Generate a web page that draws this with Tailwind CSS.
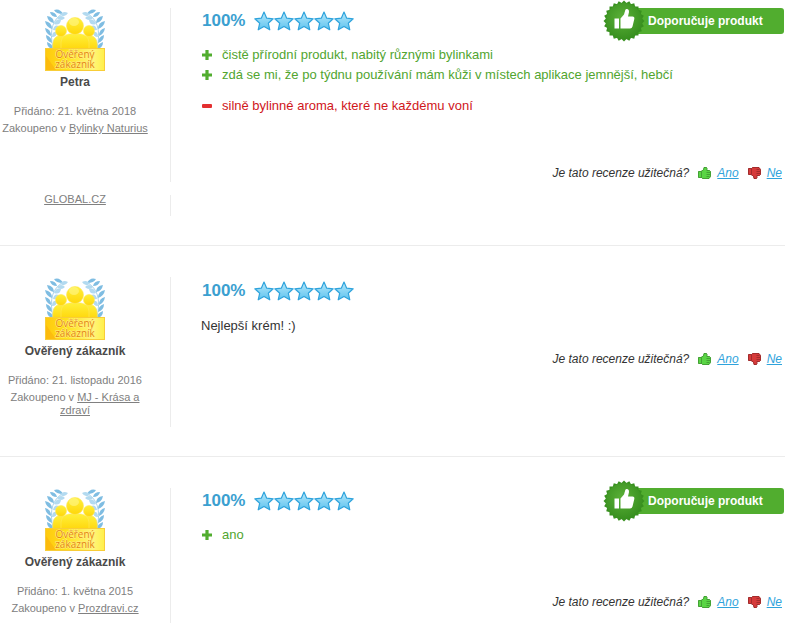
<!DOCTYPE html>
<html lang="cs">
<head>
  <meta charset="UTF-8" />
  <meta name="viewport" content="width=device-width, initial-scale=1.0" />
  <title>Recenze produktu</title>
  <script src="https://cdn.jsdelivr.net/npm/@tailwindcss/browser@4"></script>
</head>
<body class="bg-white font-['Liberation_Sans',Arial,sans-serif] text-[13px] text-[#333]">

  <!-- Ikony -->
  <svg width="0" height="0" class="absolute" aria-hidden="true">
    <defs>
      <linearGradient id="starFill" x1="0" y1="0" x2="0" y2="1">
        <stop offset="0" stop-color="#b5e8fb" />
        <stop offset="1" stop-color="#5fc3ee" />
      </linearGradient>
      <linearGradient id="goldFill" x1="0" y1="0" x2="0" y2="1">
        <stop offset="0" stop-color="#fff03a" />
        <stop offset="1" stop-color="#ffd60a" />
      </linearGradient>
      <linearGradient id="plateFill" x1="0" y1="0" x2="1" y2="0">
        <stop offset="0" stop-color="#ffc90e" />
        <stop offset="0.35" stop-color="#ffe01c" />
        <stop offset="0.8" stop-color="#fff67a" />
        <stop offset="1" stop-color="#ffef4a" />
      </linearGradient>
      <radialGradient id="sealFill" cx="0.45" cy="0.4" r="0.6">
        <stop offset="0" stop-color="#5bb038" />
        <stop offset="1" stop-color="#38901f" />
      </radialGradient>
      <symbol id="star" viewBox="0 0 20 20">
        <path d="M10 1 L12.7 7.2 L19.2 7.8 L14.3 12.2 L15.8 18.8 L10 15.4 L4.2 18.8 L5.7 12.2 L0.8 7.8 L7.3 7.2 Z" fill="url(#starFill)" stroke="#2fa3dc" stroke-width="1.2" stroke-linejoin="round" />
      </symbol>
      <symbol id="plus" viewBox="0 0 10 10">
        <path d="M3.4 0h3.2v3.4H10v3.2H6.6V10H3.4V6.6H0V3.4h3.4z" fill="#51ad2f" />
      </symbol>
      <symbol id="minus" viewBox="0 0 10 10">
        <rect y="3" width="10" height="4" rx="1" fill="#e32f30" />
      </symbol>
      <symbol id="thumb" viewBox="0 0 13 12">
        <path d="M0.5 4.500H3L5.500 2.800 6 0.500H8.500L9 1.500 8.800 3.500H11.500L12.500 4.500V9.500L11 11.500H4.500L3.500 10.500H0.500Z" fill="currentColor" stroke="currentColor" />
        <path d="M0.5 4.500H3L5.500 2.800 6 0.500H8.500L9 1.500 8.800 3.500H11.500L12.500 4.500V9.500L11 11.500H4.500L3.500 10.500H0.500Z M3.500 4.500V10.500 M8.500 5.500H12 M8.500 7.500H12 M8.500 9.500H11.500" fill="none" stroke="#000" stroke-opacity="0.24" />
      </symbol>
      <symbol id="branch" viewBox="0 0 24 42">
        <path d="M19 5Q2 13 8 40" fill="none" stroke="#a9d3ec" stroke-width="1" />
        <g fill="#7fbde2">
          <path d="M18 6Q11 6 9 2Q15 0 18 6Z" />
          <path d="M12 9Q6 9 5 4Q11 4 12 9Z" />
          <path d="M9 15Q3 14 2 8Q9 9 9 15Z" />
          <path d="M7 21Q1 19 0 13Q7 14 7 21Z" />
          <path d="M6 28Q1 26 0 20Q6 21 6 28Z" />
          <path d="M7 35Q1 33 1 27Q7 29 7 35Z" />
          <path d="M8 41Q2 40 2 34Q8 36 8 41Z" />
        </g>
        <g fill="#b3daf0">
          <path d="M15 7Q18 2 23 5Q20 10 15 7Z" />
          <path d="M12 10Q16 6 20 10Q16 14 12 10Z" />
          <path d="M9 16Q11 10 16 12Q15 18 9 16Z" />
          <path d="M8 22Q9 16 14 18Q13 23 8 22Z" />
          <path d="M7 29Q7 23 12 24Q12 29 7 29Z" />
          <path d="M8 36Q7 30 12 30Q13 35 8 36Z" />
        </g>
      </symbol>
      <symbol id="verified" viewBox="0 0 60 63">
        <use href="#branch" width="24" height="42" />
        <use href="#branch" width="24" height="42" transform="translate(60 0) scale(-1 1)" />
        <g fill="url(#goldFill)" stroke="#ffe85a" stroke-width="0.6">
          <path d="M8 42C7 34 9 29 13 28H20V42Z" />
          <path d="M52 42C53 34 51 29 47 28H40V42Z" />
          <circle cx="16" cy="23" r="5.500" />
          <circle cx="44" cy="23" r="5.500" />
          <path d="M16 42V34Q17 27 24 26H36Q43 27 44 34V42Z" />
          <circle cx="30" cy="18" r="8.500" />
        </g>
        <ellipse cx="29" cy="14" rx="5" ry="4" fill="#fff78c" opacity="0.6" />
        <rect x="0.5" y="40.500" width="59" height="22" fill="url(#plateFill)" stroke="#f8cd38" />
        <path d="M1 62V48l10 14z" fill="#f9a90b" opacity="0.5" />
        <g fill="#e5850a" stroke="#fff08a" stroke-width="1" paint-order="stroke" font-family="Open Sans, sans-serif" font-weight="500" font-size="10" text-anchor="middle">
          <text x="30" y="50">Ověřený</text>
          <text x="30" y="60">zákazník</text>
        </g>
      </symbol>
      <symbol id="seal" viewBox="0 0 42 42">
        <g fill="#38901f">
          <rect x="6.500" y="6.500" width="29" height="29" />
          <rect x="6.500" y="6.500" width="29" height="29" transform="rotate(15 21 21)" />
          <rect x="6.500" y="6.500" width="29" height="29" transform="rotate(30 21 21)" />
          <rect x="6.500" y="6.500" width="29" height="29" transform="rotate(45 21 21)" />
          <rect x="6.500" y="6.500" width="29" height="29" transform="rotate(60 21 21)" />
          <rect x="6.500" y="6.500" width="29" height="29" transform="rotate(75 21 21)" />
        </g>
        <circle cx="21" cy="21" r="18" fill="url(#sealFill)" />
        <path d="M11.500 18.500H16V28.500H11.500Z M17.500 18.500L21 14.500L22.300 10Q22.800 8.500 24.300 9Q26.300 9.700 26 12L25 16.500H29.500Q31.800 16.700 31.300 19L29.500 26.500Q29 28.500 27 28.500H17.500Z" fill="#fff" />
      </symbol>
    </defs>
  </svg>

  <main>
    <!-- Recenze 1 -->
    <article class="border-b border-[#ececec] pt-2 pb-[29px]">
      <div class="flex">
        <div class="w-[171px] shrink-0 border-r border-[#ececec] pr-5 pb-[10px] text-center text-[11px] leading-[13px] text-[#808080]">
          <svg class="mx-auto h-[63px] w-[60px]" role="img" aria-label="Ověřený zákazník"><use href="#verified" /></svg>
          <h3 class="mt-0.5 text-xs leading-[18px] font-bold text-[#4a4a4a]">Petra</h3>
          <p class="mt-[14px]">Přidáno: 21. května 2018</p>
          <p class="mt-1">Zakoupeno v <a href="#" class="underline">Bylinky Naturius</a></p>
        </div>
        <div class="min-w-0 flex-1 pr-px pl-[30px]">
          <div class="flex h-[26px] items-center">
            <span class="ml-px w-[52px] text-[17px] font-bold text-[#3ba0d0]">100%</span>
            <span class="flex" role="img" aria-label="5 z 5 hvězdiček">
              <svg class="size-5"><use href="#star" /></svg>
              <svg class="size-5"><use href="#star" /></svg>
              <svg class="size-5"><use href="#star" /></svg>
              <svg class="size-5"><use href="#star" /></svg>
              <svg class="size-5"><use href="#star" /></svg>
            </span>
            <div class="relative ml-auto h-[26px] w-40 rounded-r-[3px] bg-[#51ad2f] pl-6 text-xs leading-[26px] font-bold text-white">
              <svg class="absolute -top-2 -left-[21px] size-[42px]" aria-hidden="true"><use href="#seal" /></svg>
              Doporučuje produkt
            </div>
          </div>
          <ul class="mt-[11px] leading-5 text-[#51a52f]">
            <li class="flex items-center gap-[10px]"><svg class="ml-px size-[10px]"><use href="#plus" /></svg>čistě přírodní produkt, nabitý různými bylinkami</li>
            <li class="flex items-center gap-[10px]"><svg class="ml-px size-[10px]"><use href="#plus" /></svg>zdá se mi, že po týdnu používání mám kůži v místech aplikace jemnější, hebčí</li>
          </ul>
          <ul class="mt-[11px] leading-5 text-[#d0161b]">
            <li class="flex items-center gap-[10px]"><svg class="ml-px size-[10px]"><use href="#minus" /></svg>silně bylinné aroma, které ne každému voní</li>
          </ul>
          <div class="mt-12 flex h-[18px] items-center justify-end pr-0.5 text-xs italic">
            <span>Je tato recenze užitečná?</span>
            <svg class="ml-[9px] h-3 w-[13px] text-[#5ad545]"><use href="#thumb" /></svg>
            <a href="#" class="ml-[6px] text-[#2fa3dc] underline">Ano</a>
            <svg class="ml-[9px] h-3 w-[13px] -scale-y-100 text-[#d63a3a]"><use href="#thumb" /></svg>
            <a href="#" class="ml-[6px] text-[#2fa3dc] underline">Ne</a>
          </div>
        </div>
      </div>
      <div class="mt-[13px] h-[21px] w-[171px] border-r border-[#ececec] pr-5 text-center text-[11px] leading-[9px] text-[#808080]">
        <a href="#" class="underline">GLOBAL.CZ</a>
      </div>
    </article>

    <!-- Recenze 2 -->
    <article class="border-b border-[#ececec] pt-[31px] pb-[29px]">
      <div class="flex">
        <div class="w-[171px] shrink-0 border-r border-[#ececec] pr-5 pb-[10px] text-center text-[11px] leading-[13px] text-[#808080]">
          <svg class="mx-auto h-[63px] w-[60px]" role="img" aria-label="Ověřený zákazník"><use href="#verified" /></svg>
          <h3 class="mt-0.5 text-xs leading-[18px] font-bold text-[#4a4a4a]">Ověřený zákazník</h3>
          <p class="mt-[14px]">Přidáno: 21. listopadu 2016</p>
          <p class="mt-1">Zakoupeno v <a href="#" class="underline">MJ - Krása a zdraví</a></p>
        </div>
        <div class="min-w-0 flex-1 pr-px pl-[30px]">
          <div class="flex h-7 items-center">
            <span class="ml-px w-[52px] text-[17px] font-bold text-[#3ba0d0]">100%</span>
            <span class="flex" role="img" aria-label="5 z 5 hvězdiček">
              <svg class="size-5"><use href="#star" /></svg>
              <svg class="size-5"><use href="#star" /></svg>
              <svg class="size-5"><use href="#star" /></svg>
              <svg class="size-5"><use href="#star" /></svg>
              <svg class="size-5"><use href="#star" /></svg>
            </span>
          </div>
          <p class="mt-[11px] leading-5">Nejlepší krém! :)</p>
          <div class="mt-[14px] flex h-[18px] items-center justify-end pr-0.5 text-xs italic">
            <span>Je tato recenze užitečná?</span>
            <svg class="ml-[9px] h-3 w-[13px] text-[#5ad545]"><use href="#thumb" /></svg>
            <a href="#" class="ml-[6px] text-[#2fa3dc] underline">Ano</a>
            <svg class="ml-[9px] h-3 w-[13px] -scale-y-100 text-[#d63a3a]"><use href="#thumb" /></svg>
            <a href="#" class="ml-[6px] text-[#2fa3dc] underline">Ne</a>
          </div>
        </div>
      </div>
    </article>

    <!-- Recenze 3 -->
    <article class="pt-[31px]">
      <div class="flex">
        <div class="w-[171px] shrink-0 border-r border-[#ececec] pr-5 text-center text-[11px] leading-[13px] text-[#808080]">
          <svg class="mx-auto h-[63px] w-[60px]" role="img" aria-label="Ověřený zákazník"><use href="#verified" /></svg>
          <h3 class="mt-0.5 text-xs leading-[18px] font-bold text-[#4a4a4a]">Ověřený zákazník</h3>
          <p class="mt-[14px]">Přidáno: 1. května 2015</p>
          <p class="mt-1">Zakoupeno v <a href="#" class="underline">Prozdravi.cz</a></p>
        </div>
        <div class="min-w-0 flex-1 pr-px pb-3 pl-[30px]">
          <div class="flex h-[26px] items-center">
            <span class="ml-px w-[52px] text-[17px] font-bold text-[#3ba0d0]">100%</span>
            <span class="flex" role="img" aria-label="5 z 5 hvězdiček">
              <svg class="size-5"><use href="#star" /></svg>
              <svg class="size-5"><use href="#star" /></svg>
              <svg class="size-5"><use href="#star" /></svg>
              <svg class="size-5"><use href="#star" /></svg>
              <svg class="size-5"><use href="#star" /></svg>
            </span>
            <div class="relative ml-auto h-[26px] w-40 rounded-r-[3px] bg-[#51ad2f] pl-6 text-xs leading-[26px] font-bold text-white">
              <svg class="absolute -top-2 -left-[21px] size-[42px]" aria-hidden="true"><use href="#seal" /></svg>
              Doporučuje produkt
            </div>
          </div>
          <ul class="mt-[11px] leading-5 text-[#51a52f]">
            <li class="flex items-center gap-[10px]"><svg class="ml-px size-[10px]"><use href="#plus" /></svg>ano</li>
          </ul>
          <div class="mt-12 flex h-[18px] items-center justify-end pr-0.5 text-xs italic">
            <span>Je tato recenze užitečná?</span>
            <svg class="ml-[9px] h-3 w-[13px] text-[#5ad545]"><use href="#thumb" /></svg>
            <a href="#" class="ml-[6px] text-[#2fa3dc] underline">Ano</a>
            <svg class="ml-[9px] h-3 w-[13px] -scale-y-100 text-[#d63a3a]"><use href="#thumb" /></svg>
            <a href="#" class="ml-[6px] text-[#2fa3dc] underline">Ne</a>
          </div>
        </div>
      </div>
    </article>
  </main>

</body>
</html>
